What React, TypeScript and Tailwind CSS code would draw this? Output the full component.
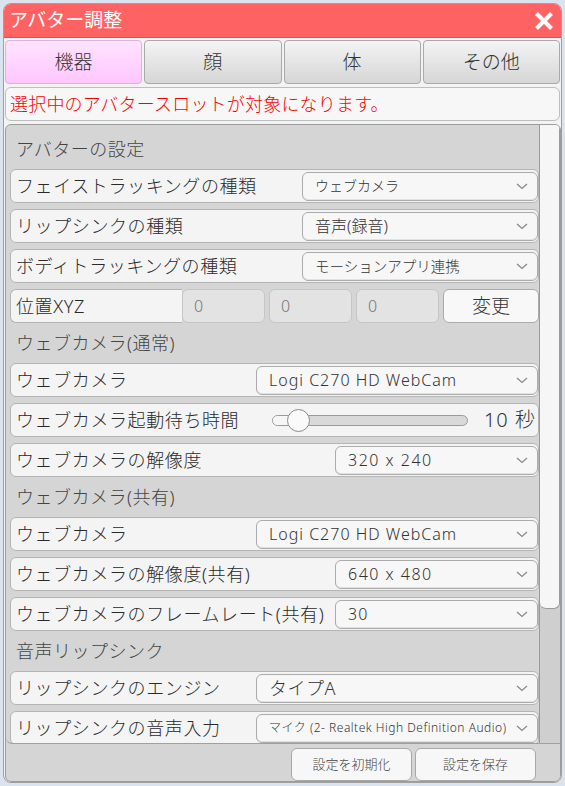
import React from "react";

const FONT = { fontFamily: '"Noto Sans", "Noto Sans CJK JP", sans-serif' };

function Chevron() {
  return (
    <svg width="12" height="7" viewBox="0 0 12 7" className="shrink-0">
      <path d="M1 1 L6 5.5 L11 1" fill="none" stroke="#8a8a8a" strokeWidth="1.3" />
    </svg>
  );
}

function Select({ w, text, size }: { w: string; text: string; size: string }) {
  return (
    <div
      className={`ml-auto ${w} h-[29px] rounded-[6px] border border-[#ababab] bg-[#f7f7f7] flex items-center justify-between pl-[12px] pr-[9px] shadow-[inset_0_-1px_0_#e2e2e2]`}
    >
      <span className={`${size} font-light text-[#333] leading-none whitespace-nowrap`}>{text}</span>
      <Chevron />
    </div>
  );
}

function Row({ children }: { children: React.ReactNode }) {
  return (
    <div className="h-[34px] rounded-[6px] border border-[#b4b4b4] bg-[#f4f4f4] flex items-center pl-[5px] shrink-0">
      {children}
    </div>
  );
}

function Label({ text }: { text: string }) {
  return <span className="text-[18px] font-light tracking-[0.6px] text-[#2a2a2a] leading-none whitespace-nowrap">{text}</span>;
}

function Header({ text }: { text: string }) {
  return (
    <div className="h-[28px] flex items-center pl-[6px] shrink-0">
      <span className="text-[18px] font-light tracking-[0.5px] text-[#444] leading-none">{text}</span>
    </div>
  );
}

export default function App() {
  return (
    <div className="w-[565px] h-[786px] bg-[#dbe3ee] p-[3px]" style={FONT}>
      <div className="h-[780px] rounded-[8px] border border-[#a0a0a0] bg-[#f3f3f3] flex flex-col overflow-hidden">
        {/* title */}
        <div className="h-[34px] bg-[#ff6262] border-b border-[#e05050] flex items-center justify-between pl-[5px] pr-[7px] shrink-0">
          <span className="text-white text-[19px] leading-none">アバター調整</span>
          <svg width="20" height="18" viewBox="0 0 20 18">
            <path d="M2.5 1.5 L17.5 16.5 M17.5 1.5 L2.5 16.5" stroke="#fff" strokeWidth="4" />
          </svg>
        </div>
        {/* tabs */}
        <div className="flex gap-[2px] pl-[1px] pr-[1px] mt-[2px] h-[44px] shrink-0">
          <div className="flex-1 rounded-[4px] border border-[#e0b0e0] bg-gradient-to-b from-[#ffe4ff] to-[#ffc6ff] flex items-center justify-center">
            <span className="text-[19px] font-light text-[#333] leading-none">機器</span>
          </div>
          {["顔", "体", "その他"].map((t) => (
            <div
              key={t}
              className="flex-1 rounded-[4px] border border-[#a9a9a9] bg-gradient-to-b from-[#f4f4f4] to-[#d6d6d6] flex items-center justify-center"
            >
              <span className="text-[19px] font-light text-[#333] leading-none">{t}</span>
            </div>
          ))}
        </div>
        {/* notice */}
        <div className="mx-[1px] mt-[3px] h-[34px] rounded-[6px] border border-[#bdbdbd] bg-[#f7f7f7] flex items-center pl-[4px] shrink-0">
          <span className="text-[18px] font-light tracking-[0.2px] text-[#ff0000] leading-none">選択中のアバタースロットが対象になります。</span>
        </div>
        {/* panel */}
        <div className="ml-[1px] mt-[3px] flex-1 min-h-0 rounded-[6px] border border-[#9c9c9c] bg-[#d5d5d5] flex flex-col overflow-hidden">
          <div className="flex-1 min-h-0 flex border-b border-[#a0a0a0] rounded-bl-[6px]">
            <div className="flex-1 min-w-0 overflow-hidden pl-[4px] pr-0 pt-[10px] flex flex-col gap-[6px]">
              <Header text="アバターの設定" />
              <Row>
                <Label text="フェイストラッキングの種類" />
                <Select w="w-[236px]" text="ウェブカメラ" size="text-[14px]" />
              </Row>
              <Row>
                <Label text="リップシンクの種類" />
                <Select w="w-[236px]" text="音声(録音)" size="text-[16px]" />
              </Row>
              <Row>
                <Label text="ボディトラッキングの種類" />
                <Select w="w-[236px]" text="モーションアプリ連携" size="text-[14.5px]" />
              </Row>
              <div className="h-[34px] flex shrink-0">
                <div className="w-[174px] rounded-l-[6px] border border-r-0 border-[#b4b4b4] bg-[#f4f4f4] flex items-center pl-[5px]">
                  <Label text="位置XYZ" />
                </div>
                <div className="flex gap-[4px]">
                  {[0, 1, 2].map((i) => (
                    <div
                      key={i}
                      className="w-[83px] rounded-[6px] border border-[#c6c6c6] bg-[#e3e3e3] flex items-center pl-[11px]"
                    >
                      <span className="text-[16px] font-light text-[#777] leading-none">0</span>
                    </div>
                  ))}
                  <div className="w-[96px] rounded-[6px] border border-[#ababab] bg-[#f8f8f8] flex items-center justify-center">
                    <span className="text-[19px] font-light text-[#333] leading-none">変更</span>
                  </div>
                </div>
              </div>
              <Header text="ウェブカメラ(通常)" />
              <Row>
                <Label text="ウェブカメラ" />
                <Select w="w-[282px]" text="Logi C270 HD WebCam" size="text-[16px] tracking-[1px]" />
              </Row>
              <Row>
                <Label text="ウェブカメラ起動待ち時間" />
                <div className="ml-auto flex items-center pr-[2px]">
                  <div className="relative w-[196px] h-[11px] rounded-full border border-[#9a9a9a] bg-[#d9d9d9]">
                    <div className="absolute left-0 top-0 h-full w-[26px] rounded-l-full bg-[#f6f6f6]" />
                    <div className="absolute left-[14px] top-[-7px] w-[23px] h-[23px] rounded-full border border-[#8a8a8a] bg-[#fafafa]" />
                  </div>
                  <span className="ml-[16px] text-[20px] font-light text-[#333] leading-none tracking-[1px]">10 秒</span>
                </div>
              </Row>
              <Row>
                <Label text="ウェブカメラの解像度" />
                <Select w="w-[203px]" text="320 x 240" size="text-[16px] tracking-[1.5px]" />
              </Row>
              <Header text="ウェブカメラ(共有)" />
              <Row>
                <Label text="ウェブカメラ" />
                <Select w="w-[282px]" text="Logi C270 HD WebCam" size="text-[16px] tracking-[1px]" />
              </Row>
              <Row>
                <Label text="ウェブカメラの解像度(共有)" />
                <Select w="w-[203px]" text="640 x 480" size="text-[16px] tracking-[1.5px]" />
              </Row>
              <Row>
                <Label text="ウェブカメラのフレームレート(共有)" />
                <Select w="w-[203px]" text="30" size="text-[16px] tracking-[1px]" />
              </Row>
              <Header text="音声リップシンク" />
              <Row>
                <Label text="リップシンクのエンジン" />
                <Select w="w-[282px]" text="タイプA" size="text-[18px] tracking-[0.5px]" />
              </Row>
              <Row>
                <Label text="リップシンクの音声入力" />
                <Select w="w-[282px]" text="マイク (2- Realtek High Definition Audio)" size="text-[12px] tracking-[0.5px]" />
              </Row>
            </div>
            {/* scrollbar */}
            <div className="w-[21px] shrink-0 border-l border-[#9a9a9a] bg-[#cfcfcf] flex flex-col">
              <div className="h-[484px] rounded-b-[6px] border-b border-r border-[#9a9a9a] bg-[#f6f6f6]" />
            </div>
          </div>
          {/* footer */}
          <div className="h-[37px] shrink-0 flex items-end justify-end gap-[3px] pr-[24px]">
            <div className="w-[121px] h-[33px] rounded-[6px] border border-[#a8a8a8] bg-[#f7f7f7] flex items-center justify-center">
              <span className="text-[13px] font-light text-[#444] leading-none">設定を初期化</span>
            </div>
            <div className="w-[121px] h-[33px] rounded-[6px] border border-[#a8a8a8] bg-[#f7f7f7] flex items-center justify-center">
              <span className="text-[13px] font-light text-[#444] leading-none">設定を保存</span>
            </div>
          </div>
        </div>
      </div>
    </div>
  );
}
